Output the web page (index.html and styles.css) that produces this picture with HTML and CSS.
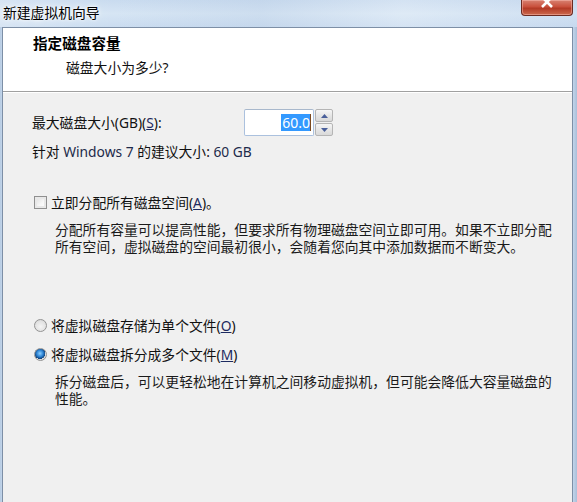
FILE: index.html
```html
<!DOCTYPE html>
<html lang="zh-CN">
<head>
<meta charset="utf-8">
<title>新建虚拟机向导</title>
<link rel="stylesheet" href="styles.css">
</head>
<body>
<div class="window">
  <div class="titlebar">
    <span class="title">新建虚拟机向导</span>
    <span class="close"><svg width="14" height="8" viewBox="0 0 14 8"><path d="M2 -3 L12 7 M12 -3 L2 7" stroke="#fff" stroke-width="2.6"/></svg></span>
  </div>
  <div class="client">
    <div class="header">
      <div class="h-title">指定磁盘容量</div>
      <div class="h-sub">磁盘大小为多少?</div>
    </div>
    <div class="body">
      <div class="size-row">
        <span class="size-label">最大磁盘大小(GB)(<u>S</u>):</span>
        <div class="spin">
          <div class="spin-input"><span class="sel">60.0</span><span class="caret"></span></div>
          <div class="spin-btns">
            <div class="spin-btn"><svg width="7" height="4" viewBox="0 0 7 4"><path d="M0 4 L3.5 0 L7 4 Z" fill="#4a5f9a"/></svg></div>
            <div class="spin-btn"><svg width="7" height="4" viewBox="0 0 7 4"><path d="M0 0 L3.5 4 L7 0 Z" fill="#4a5f9a"/></svg></div>
          </div>
        </div>
      </div>
      <div class="recommend">针对 <span class="latin">Windows 7</span> 的建议大小: <span class="latin">60 GB</span></div>

      <div class="option check-row">
        <span class="checkbox"></span>
        <span>立即分配所有磁盘空间(<u>A</u>)。</span>
      </div>
      <p class="desc">分配所有容量可以提高性能，但要求所有物理磁盘空间立即可用。如果不立即分配<br>所有空间，虚拟磁盘的空间最初很小，会随着您向其中添加数据而不断变大。</p>

      <div class="option radio-row first-radio">
        <span class="radio"></span>
        <span>将虚拟磁盘存储为单个文件(<u>O</u>)</span>
      </div>
      <div class="option radio-row">
        <span class="radio checked"></span>
        <span>将虚拟磁盘拆分成多个文件(<u>M</u>)</span>
      </div>
      <p class="desc">拆分磁盘后，可以更轻松地在计算机之间移动虚拟机，但可能会降低大容量磁盘的<br>性能。</p>
    </div>
  </div>
</div>
</body>
</html>
```
FILE: styles.css
```css
* { box-sizing: border-box; }
html, body {
  margin: 0;
  padding: 0;
  width: 577px;
  height: 502px;
  overflow: hidden;
}
body {
  font-family: "Noto Sans", "Noto Sans CJK SC", sans-serif;
  font-size: 13.8px;
  color: #111;
  background: #c6d8ec;
}
.window {
  width: 577px;
  height: 502px;
  display: flex;
  flex-direction: column;
  background: linear-gradient(90deg, #b7cbe2 0, #c8daee 3px, #c8daee 572px, #a9bfd9 577px);
}
.titlebar {
  height: 27px;
  flex: none;
  display: flex;
  justify-content: space-between;
  align-items: flex-start;
  padding: 0 4px 0 3px;
  background:
    linear-gradient(90deg, rgba(255,255,255,0.25) 0, rgba(255,255,255,0) 20%, rgba(180,200,225,0.25) 45%, rgba(255,255,255,0.2) 70%, rgba(190,210,235,0.25) 100%),
    linear-gradient(180deg, #c9dbef 0, #d6e5f4 50%, #cadcf0 100%);
}
.title {
  margin-top: 4px;
  font-family: "Noto Sans CJK SC", sans-serif;
  font-size: 13.8px;
  line-height: 17px;
  color: #000;
  text-shadow: 0 0 6px #fff, 0 0 3px #fff;
}
.close {
  width: 52px;
  height: 16px;
  flex: none;
  display: flex;
  justify-content: center;
  align-items: flex-start;
  border: 1px solid #6b2b22;
  border-top: none;
  border-radius: 0 0 4px 4px;
  background: linear-gradient(180deg, #d88272 0, #c9503c 45%, #b33a26 55%, #cc6a4e 100%);
  box-shadow: inset 0 0 0 1px rgba(255,200,190,0.45);
}
.client {
  flex: 1;
  margin: 0 4px 0 2px;
  border: 1px solid #7d8fa6;
  border-bottom: none;
  display: flex;
  flex-direction: column;
  background: #f0f0f0;
}
.header {
  height: 64px;
  flex: none;
  background: #fff;
  border-bottom: 1px solid #a0a0a0;
  padding: 7px 0 0 30px;
  box-shadow: 0 1px 0 #fff;
}
.h-title {
  font-weight: bold;
  font-size: 14.6px;
  line-height: 17px;
  color: #000;
}
.h-sub {
  margin-top: 7px;
  padding-left: 33px;
  line-height: 17px;
  color: #111;
}
.body {
  flex: 1;
  padding: 17px 0 0 29px;
}
.size-row {
  display: flex;
  align-items: center;
}
.size-label {
  width: 212px;
  line-height: 17px;
}
.spin {
  display: flex;
  align-items: stretch;
  height: 27px;
}
.spin-input {
  width: 70px;
  height: 27px;
  background: #fff;
  border: 1px solid #abc1de;
  border-top-color: #a8b8cc;
  border-radius: 2px;
  display: flex;
  justify-content: flex-end;
  align-items: center;
  padding-right: 2px;
}
.sel {
  background: #3399ff;
  color: #fff;
  font-size: 14px;
  line-height: 17px;
  padding: 0 0 0 1px;
}
.caret {
  width: 1px;
  height: 17px;
  background: #7a4a20;
}
.spin-btns {
  margin-left: 1px;
  width: 18px;
  display: flex;
  flex-direction: column;
  gap: 1px;
}
.spin-btn {
  flex: 1;
  border: 1px solid #b5b5b5;
  border-radius: 2px;
  background: linear-gradient(180deg, #f6f6f6 0, #e6e6e6 50%, #d9d9d9 100%);
  display: flex;
  justify-content: center;
  align-items: center;
}
.recommend {
  margin-top: 7px;
  line-height: 17px;
}
.latin { color: #1d2a4a; }
u { color: #1d2a60; }
.option {
  display: flex;
  align-items: center;
  gap: 4px;
  line-height: 17px;
}
.check-row {
  margin-top: 34px;
  margin-left: 2px;
}
.checkbox {
  width: 13px;
  height: 13px;
  flex: none;
  border: 1px solid #8f8f8f;
  background: linear-gradient(135deg, #dcdcdc 0, #f7f7f7 60%, #ffffff 100%);
  box-shadow: inset 0 0 0 2px #e8e8e8;
}
.desc {
  margin: 10px 0 0 23px;
  white-space: nowrap;
  line-height: 17px;
  color: #1a1a1a;
}
.radio-row {
  margin-left: 2px;
}
.first-radio { margin-top: 62px; }
.radio-row + .radio-row { margin-top: 12px; }
.radio {
  width: 13px;
  height: 13px;
  flex: none;
  border-radius: 50%;
  border: 1px solid #939393;
  background: radial-gradient(circle at 50% 60%, #f4f4f4 0, #e2e2e2 60%, #cfcfcf 100%);
}
.radio.checked {
  background:
    radial-gradient(circle at 45% 40%, #8fd0ff 0, #2f86d6 35%, #10427c 60%, rgba(0,0,0,0) 62%),
    radial-gradient(circle, #f0f0f0 0, #d6d6d6 100%);
}
```
